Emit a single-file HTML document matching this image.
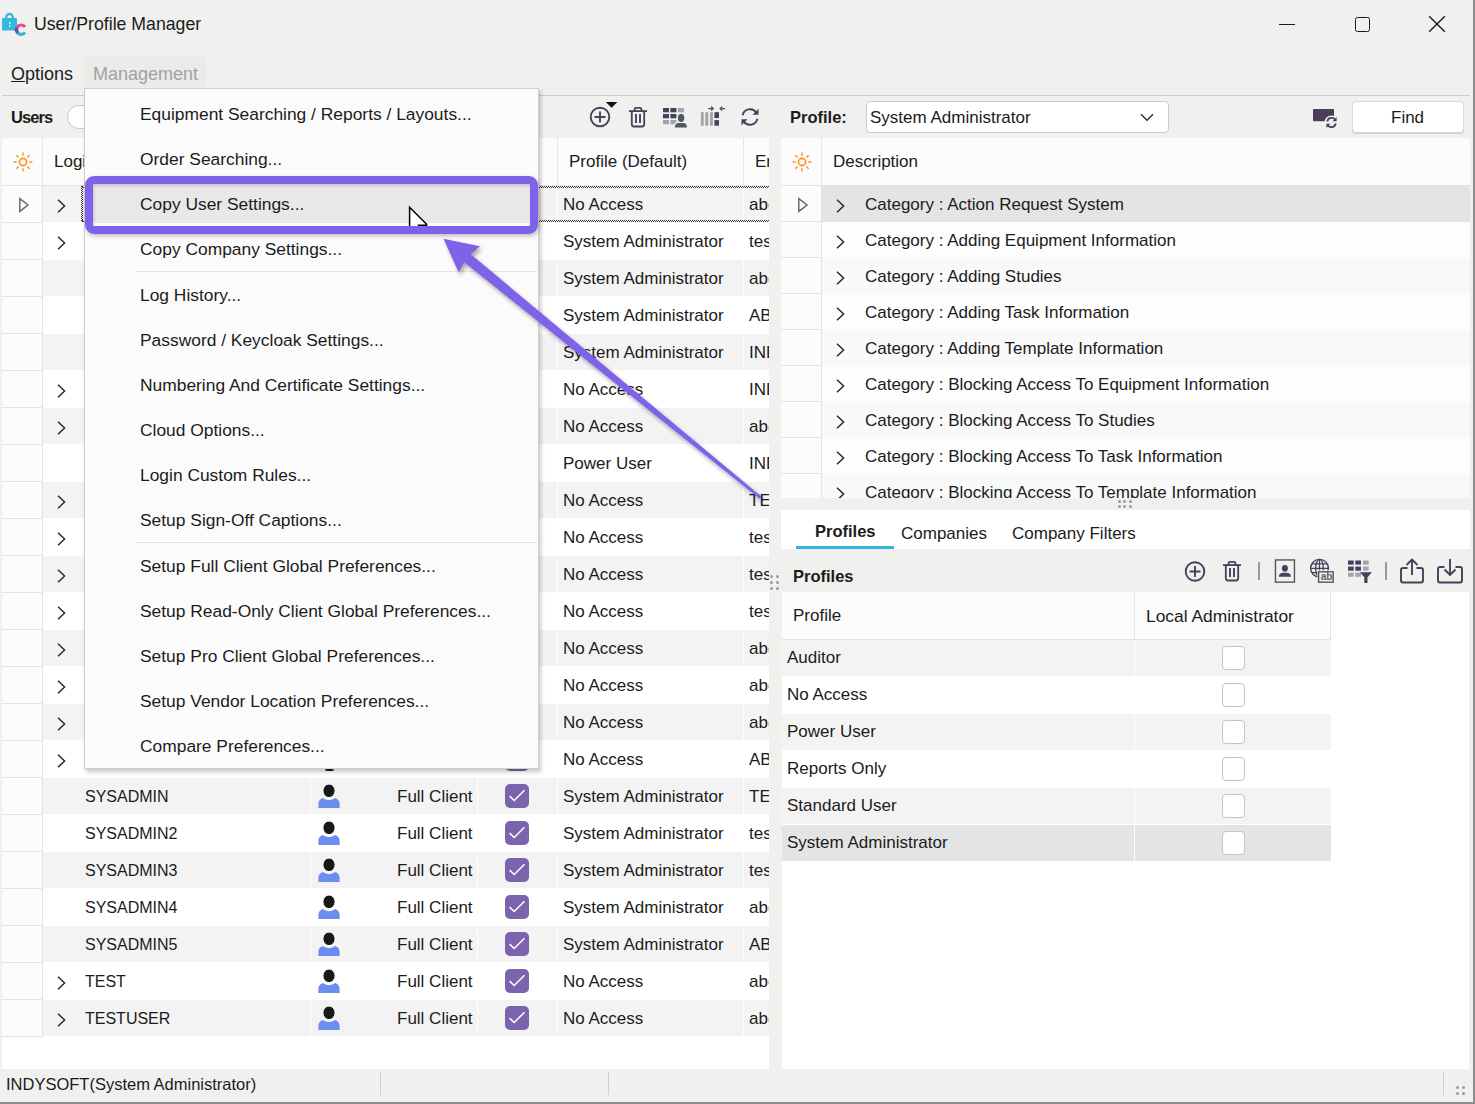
<!DOCTYPE html><html><head><meta charset="utf-8"><style>
*{box-sizing:border-box;margin:0;padding:0}
html,body{width:1475px;height:1104px;overflow:hidden}
body{position:relative;background:#f0f0ef;font-family:"Liberation Sans",sans-serif;font-size:17px;color:#1b1b1b}
.ab{position:absolute}
.t{position:absolute;white-space:nowrap}
svg{position:absolute;overflow:visible}
.chev{position:absolute;width:9px;height:14px}
</style></head><body>

<div class="ab" style="left:1473px;top:0;width:2px;height:1104px;background:#8f8f8f"></div>
<div class="ab" style="left:0;top:1102px;width:1475px;height:2px;background:#8f8f8f"></div>
<svg style="left:0;top:8px" width="32" height="32" viewBox="0 0 32 32">
<path d="M6.2 10.5 V9.3 A3.3 3.3 0 0 1 12.8 9.3 V10.5" fill="none" stroke="#35b8e0" stroke-width="2.3"/>
<rect x="2" y="10" width="15" height="12.6" rx="1.2" fill="#35b8e0"/>
<rect x="9" y="14" width="1.4" height="2" fill="#f0f0ef"/><rect x="9" y="17.2" width="1.4" height="1.6" fill="#f0f0ef"/>
<path d="M25.05 19.00 A4.7 4.7 0 0 0 17.13 19.35" fill="none" stroke="#e04e9a" stroke-width="3.2"/>
<path d="M17.13 19.35 A4.7 4.7 0 0 0 18.06 25.19" fill="none" stroke="#6f4fa8" stroke-width="3.2"/>
<path d="M18.06 25.19 A4.7 4.7 0 0 0 25.05 24.40" fill="none" stroke="#35b8e0" stroke-width="3.2"/>
</svg>
<div class="t" style="left:34px;top:12px;font-size:17.7px;line-height:24px">User/Profile Manager</div>
<div class="ab" style="left:1279px;top:23.8px;width:16px;height:1.5px;background:#1b1b1b"></div>
<div class="ab" style="left:1354.5px;top:16.5px;width:15px;height:15px;border:1.5px solid #1b1b1b;border-radius:2.5px"></div>
<svg style="left:1428px;top:15px" width="18" height="18" viewBox="0 0 18 18"><path d="M1.2 1.2 L16.8 16.8 M16.8 1.2 L1.2 16.8" stroke="#1b1b1b" stroke-width="1.45"/></svg>
<div class="t" style="left:11px;top:62px;font-size:18px;line-height:24px;">Options</div>
<div class="ab" style="left:11px;top:81px;width:14px;height:1px;background:#1b1b1b"></div>
<div class="ab" style="left:84px;top:57px;width:123px;height:30px;background:#ebebea;border-radius:3px"></div>
<div class="t" style="left:93px;top:62px;font-size:18px;line-height:24px;color:#a2a2a2">Management</div>
<div class="ab" style="left:2px;top:95px;width:1468px;height:1px;background:#cdcdcd"></div>
<div class="t" style="left:11px;top:105px;font-size:16.5px;line-height:24px;font-weight:bold;letter-spacing:-0.9px">Users</div>
<div class="ab" style="left:67px;top:105px;width:40px;height:23.5px;background:#fff;border:1.2px solid #c9c9c9;border-radius:12px"></div>
<svg style="left:588px;top:100px" width="32" height="30" viewBox="0 0 32 30">
<circle cx="12" cy="17" r="9.3" fill="none" stroke="#4a3e5c" stroke-width="1.9"/>
<path d="M12 11.5 V22.5 M6.5 17 H17.5" stroke="#4a3e5c" stroke-width="1.9"/>
<path d="M17.8 1.9 H29.4 L23.6 7.7 Z" fill="#111"/></svg>
<svg style="left:628px;top:106px" width="20" height="22" viewBox="0 0 20 22">
<path d="M1 5.1 H19" stroke="#4a3e5c" stroke-width="1.8"/>
<path d="M6.6 5.1 V3.3 Q6.6 1.9 8.2 1.9 H11.8 Q13.4 1.9 13.4 3.3 V5.1" fill="none" stroke="#4a3e5c" stroke-width="1.8"/>
<path d="M3.8 5.1 V18.3 Q3.8 20.5 5.9 20.5 H14.1 Q16.2 20.5 16.2 18.3 V5.1" fill="none" stroke="#4a3e5c" stroke-width="1.8"/>
<path d="M8 8 V17 M12 8 V17" stroke="#4a3e5c" stroke-width="1.9"/></svg>
<svg style="left:663px;top:107px" width="26" height="22" viewBox="0 0 26 22"><rect x="0" y="1.0" width="6" height="4.3" fill="#4a3e5c"/><rect x="7.4" y="1.0" width="6" height="4.3" fill="#4a3e5c"/><rect x="14.9" y="1.0" width="6" height="4.3" fill="#a3a6a9"/><rect x="0" y="7.0" width="6" height="4.3" fill="#4a3e5c"/><rect x="7.4" y="7.0" width="6" height="4.3" fill="#4a3e5c"/><rect x="14.9" y="7.0" width="6" height="4.3" fill="#a3a6a9"/><rect x="0" y="13.0" width="6" height="4.3" fill="#a3a6a9"/><rect x="7.4" y="13.0" width="6" height="4.3" fill="#a3a6a9"/><rect x="14.9" y="13.0" width="6" height="4.3" fill="#a3a6a9"/><ellipse cx="18.1" cy="10.9" rx="4.2" ry="5" fill="#f0f0ef"/><path d="M10.8 21.5 V19.5 Q11 15 15.5 14.8 H20.8 Q25 15 25 19.5 V21.5 Z" fill="#f0f0ef"/><ellipse cx="18.1" cy="10.9" rx="3.2" ry="4" fill="#4f5860"/><path d="M12 20.6 V19.6 Q12.2 16 15.8 15.9 H20.4 Q23.8 16 23.8 19.6 V20.6 Z" fill="#4f5860"/></svg>
<svg style="left:700px;top:105px" width="26" height="23" viewBox="0 0 26 23">
<rect x="0.9" y="7.2" width="2.8" height="13.5" fill="#a3a6a9"/><rect x="5.3" y="7.2" width="3" height="13.5" fill="#a3a6a9"/><rect x="10" y="7.2" width="2.9" height="13.5" fill="#a3a6a9"/>
<rect x="14.4" y="7.2" width="4.6" height="5.9" fill="#4a3e5c"/><rect x="14.4" y="15.1" width="4.6" height="5.6" fill="#4a3e5c"/>
<path d="M8.3 3.6 H12.5" stroke="#4f5860" stroke-width="1.5"/><path d="M11.2 0.8 L14.2 3.6 L11.2 6.4 Z" fill="#4f5860"/>
<path d="M20.9 3.6 H25.1" stroke="#4f5860" stroke-width="1.5"/><path d="M22.2 0.8 L19.2 3.6 L22.2 6.4 Z" fill="#4f5860"/></svg>
<svg style="left:740px;top:107px" width="20" height="20" viewBox="0 0 20 20">
<path d="M2.6 8.2 A7.6 7.6 0 0 1 16.3 5.6" fill="none" stroke="#4a3e5c" stroke-width="1.9"/>
<path d="M17.4 11.8 A7.6 7.6 0 0 1 3.7 14.4" fill="none" stroke="#4a3e5c" stroke-width="1.9"/>
<path d="M18.5 1.8 V7.8 H12.5 Z" fill="#4a3e5c"/><path d="M1.5 18.2 V12.2 H7.5 Z" fill="#4a3e5c"/></svg>
<div class="ab" style="left:2px;top:138px;width:767px;height:931px;background:#fff"></div>
<div class="ab" style="left:2px;top:138px;width:767px;height:48px;background:#fcfcfc;border-bottom:1px solid #e3e3e3"></div>
<div class="ab" style="left:42px;top:138px;width:1px;height:47px;background:#e6e6e6"></div>
<div class="ab" style="left:310px;top:138px;width:1px;height:47px;background:#e6e6e6"></div>
<div class="ab" style="left:477px;top:138px;width:1px;height:47px;background:#e6e6e6"></div>
<div class="ab" style="left:557px;top:138px;width:1px;height:47px;background:#e6e6e6"></div>
<div class="ab" style="left:743px;top:138px;width:1px;height:47px;background:#e6e6e6"></div>
<svg style="left:12.8px;top:152px" width="20" height="20" viewBox="-10 -10 20 20"><circle cx="0" cy="0" r="3.6" fill="none" stroke="#f7901e" stroke-width="1.6"/><line x1="6.30" y1="0.00" x2="9.40" y2="0.00" stroke="#f7901e" stroke-width="1.4"/><line x1="4.45" y1="4.45" x2="6.65" y2="6.65" stroke="#f7901e" stroke-width="1.4"/><line x1="0.00" y1="6.30" x2="0.00" y2="9.40" stroke="#f7901e" stroke-width="1.4"/><line x1="-4.45" y1="4.45" x2="-6.65" y2="6.65" stroke="#f7901e" stroke-width="1.4"/><line x1="-6.30" y1="0.00" x2="-9.40" y2="0.00" stroke="#f7901e" stroke-width="1.4"/><line x1="-4.45" y1="-4.45" x2="-6.65" y2="-6.65" stroke="#f7901e" stroke-width="1.4"/><line x1="-0.00" y1="-6.30" x2="-0.00" y2="-9.40" stroke="#f7901e" stroke-width="1.4"/><line x1="4.45" y1="-4.45" x2="6.65" y2="-6.65" stroke="#f7901e" stroke-width="1.4"/></svg>
<div class="t" style="left:54px;top:150px;line-height:24px">Login</div>
<div class="t" style="left:569px;top:150px;line-height:24px">Profile (Default)</div>
<div class="t" style="left:755px;top:150px;line-height:24px">Errors</div>
<div class="ab" style="left:769px;top:138px;width:12px;height:931px;background:#f0f0ef"></div>
<div class="ab" style="left:0;top:0;width:769px;height:1069px;overflow:hidden">
<div class="ab" style="left:42px;top:186px;width:727px;height:36px;background:#f3f3f3"></div>
<div class="ab" style="left:2px;top:186px;width:41px;height:37px;background:#fcfcfc;border-bottom:1px solid #e3e3e3;border-right:1px solid #e3e3e3"></div>
<div class="ab" style="left:310px;top:186px;width:1px;height:37px;background:#fff"></div>
<div class="ab" style="left:477px;top:186px;width:1px;height:37px;background:#fff"></div>
<div class="ab" style="left:557px;top:186px;width:1px;height:37px;background:#fff"></div>
<div class="ab" style="left:743px;top:186px;width:1px;height:37px;background:#fff"></div>
<svg style="left:57px;top:198.5px" width="9" height="14" viewBox="0 0 9 14"><path d="M1 0.7 L7.6 7 L1 13.3" fill="none" stroke="#2b2b2b" stroke-width="1.5"/></svg>
<div class="t" style="left:85px;top:193px;line-height:24px;font-size:16px">USER01</div>
<svg style="left:318px;top:192px" width="23" height="25" viewBox="0 0 23 25"><path d="M0.4 24 V19.6 Q0.6 15.6 4.6 14.1 Q7.6 16.2 11 16.2 Q14.4 16.2 17.4 14.1 Q21.4 15.6 21.6 19.6 V24 Z" fill="#6a8def"/><ellipse cx="11" cy="6.8" rx="6.1" ry="6.8" fill="#181818" stroke="#fff" stroke-width="1"/></svg>
<div class="t" style="left:397px;top:193px;line-height:24px">Full Client</div>
<svg style="left:505px;top:192px" width="24" height="24" viewBox="0 0 24 24"><rect x="0" y="0" width="24" height="24" rx="5" fill="#7b63ae"/><path d="M4.6 12.1 L9.2 16.5 L19.5 6.3" fill="none" stroke="#fff" stroke-width="1.5"/></svg>
<div class="t" style="left:563px;top:193px;line-height:24px">No Access</div>
<div class="t" style="left:749px;top:193px;line-height:24px">abc</div>
<div class="ab" style="left:42px;top:223px;width:727px;height:36px;background:#ffffff"></div>
<div class="ab" style="left:2px;top:223px;width:41px;height:37px;background:#fcfcfc;border-bottom:1px solid #e3e3e3;border-right:1px solid #e3e3e3"></div>
<div class="ab" style="left:310px;top:223px;width:1px;height:37px;background:#fff"></div>
<div class="ab" style="left:477px;top:223px;width:1px;height:37px;background:#fff"></div>
<div class="ab" style="left:557px;top:223px;width:1px;height:37px;background:#fff"></div>
<div class="ab" style="left:743px;top:223px;width:1px;height:37px;background:#fff"></div>
<svg style="left:57px;top:235.5px" width="9" height="14" viewBox="0 0 9 14"><path d="M1 0.7 L7.6 7 L1 13.3" fill="none" stroke="#2b2b2b" stroke-width="1.5"/></svg>
<div class="t" style="left:85px;top:230px;line-height:24px;font-size:16px">USER02</div>
<svg style="left:318px;top:229px" width="23" height="25" viewBox="0 0 23 25"><path d="M0.4 24 V19.6 Q0.6 15.6 4.6 14.1 Q7.6 16.2 11 16.2 Q14.4 16.2 17.4 14.1 Q21.4 15.6 21.6 19.6 V24 Z" fill="#6a8def"/><ellipse cx="11" cy="6.8" rx="6.1" ry="6.8" fill="#181818" stroke="#fff" stroke-width="1"/></svg>
<div class="t" style="left:397px;top:230px;line-height:24px">Full Client</div>
<svg style="left:505px;top:229px" width="24" height="24" viewBox="0 0 24 24"><rect x="0" y="0" width="24" height="24" rx="5" fill="#7b63ae"/><path d="M4.6 12.1 L9.2 16.5 L19.5 6.3" fill="none" stroke="#fff" stroke-width="1.5"/></svg>
<div class="t" style="left:563px;top:230px;line-height:24px">System Administrator</div>
<div class="t" style="left:749px;top:230px;line-height:24px">test</div>
<div class="ab" style="left:42px;top:260px;width:727px;height:36px;background:#f3f3f3"></div>
<div class="ab" style="left:2px;top:260px;width:41px;height:37px;background:#fcfcfc;border-bottom:1px solid #e3e3e3;border-right:1px solid #e3e3e3"></div>
<div class="ab" style="left:310px;top:260px;width:1px;height:37px;background:#fff"></div>
<div class="ab" style="left:477px;top:260px;width:1px;height:37px;background:#fff"></div>
<div class="ab" style="left:557px;top:260px;width:1px;height:37px;background:#fff"></div>
<div class="ab" style="left:743px;top:260px;width:1px;height:37px;background:#fff"></div>
<div class="t" style="left:85px;top:267px;line-height:24px;font-size:16px">USER03</div>
<svg style="left:318px;top:266px" width="23" height="25" viewBox="0 0 23 25"><path d="M0.4 24 V19.6 Q0.6 15.6 4.6 14.1 Q7.6 16.2 11 16.2 Q14.4 16.2 17.4 14.1 Q21.4 15.6 21.6 19.6 V24 Z" fill="#6a8def"/><ellipse cx="11" cy="6.8" rx="6.1" ry="6.8" fill="#181818" stroke="#fff" stroke-width="1"/></svg>
<div class="t" style="left:397px;top:267px;line-height:24px">Full Client</div>
<svg style="left:505px;top:266px" width="24" height="24" viewBox="0 0 24 24"><rect x="0" y="0" width="24" height="24" rx="5" fill="#7b63ae"/><path d="M4.6 12.1 L9.2 16.5 L19.5 6.3" fill="none" stroke="#fff" stroke-width="1.5"/></svg>
<div class="t" style="left:563px;top:267px;line-height:24px">System Administrator</div>
<div class="t" style="left:749px;top:267px;line-height:24px">abc</div>
<div class="ab" style="left:42px;top:297px;width:727px;height:36px;background:#ffffff"></div>
<div class="ab" style="left:2px;top:297px;width:41px;height:37px;background:#fcfcfc;border-bottom:1px solid #e3e3e3;border-right:1px solid #e3e3e3"></div>
<div class="ab" style="left:310px;top:297px;width:1px;height:37px;background:#fff"></div>
<div class="ab" style="left:477px;top:297px;width:1px;height:37px;background:#fff"></div>
<div class="ab" style="left:557px;top:297px;width:1px;height:37px;background:#fff"></div>
<div class="ab" style="left:743px;top:297px;width:1px;height:37px;background:#fff"></div>
<div class="t" style="left:85px;top:304px;line-height:24px;font-size:16px">USER04</div>
<svg style="left:318px;top:303px" width="23" height="25" viewBox="0 0 23 25"><path d="M0.4 24 V19.6 Q0.6 15.6 4.6 14.1 Q7.6 16.2 11 16.2 Q14.4 16.2 17.4 14.1 Q21.4 15.6 21.6 19.6 V24 Z" fill="#6a8def"/><ellipse cx="11" cy="6.8" rx="6.1" ry="6.8" fill="#181818" stroke="#fff" stroke-width="1"/></svg>
<div class="t" style="left:397px;top:304px;line-height:24px">Full Client</div>
<svg style="left:505px;top:303px" width="24" height="24" viewBox="0 0 24 24"><rect x="0" y="0" width="24" height="24" rx="5" fill="#7b63ae"/><path d="M4.6 12.1 L9.2 16.5 L19.5 6.3" fill="none" stroke="#fff" stroke-width="1.5"/></svg>
<div class="t" style="left:563px;top:304px;line-height:24px">System Administrator</div>
<div class="t" style="left:749px;top:304px;line-height:24px">ABC</div>
<div class="ab" style="left:42px;top:334px;width:727px;height:36px;background:#f3f3f3"></div>
<div class="ab" style="left:2px;top:334px;width:41px;height:37px;background:#fcfcfc;border-bottom:1px solid #e3e3e3;border-right:1px solid #e3e3e3"></div>
<div class="ab" style="left:310px;top:334px;width:1px;height:37px;background:#fff"></div>
<div class="ab" style="left:477px;top:334px;width:1px;height:37px;background:#fff"></div>
<div class="ab" style="left:557px;top:334px;width:1px;height:37px;background:#fff"></div>
<div class="ab" style="left:743px;top:334px;width:1px;height:37px;background:#fff"></div>
<div class="t" style="left:85px;top:341px;line-height:24px;font-size:16px">USER05</div>
<svg style="left:318px;top:340px" width="23" height="25" viewBox="0 0 23 25"><path d="M0.4 24 V19.6 Q0.6 15.6 4.6 14.1 Q7.6 16.2 11 16.2 Q14.4 16.2 17.4 14.1 Q21.4 15.6 21.6 19.6 V24 Z" fill="#6a8def"/><ellipse cx="11" cy="6.8" rx="6.1" ry="6.8" fill="#181818" stroke="#fff" stroke-width="1"/></svg>
<div class="t" style="left:397px;top:341px;line-height:24px">Full Client</div>
<svg style="left:505px;top:340px" width="24" height="24" viewBox="0 0 24 24"><rect x="0" y="0" width="24" height="24" rx="5" fill="#7b63ae"/><path d="M4.6 12.1 L9.2 16.5 L19.5 6.3" fill="none" stroke="#fff" stroke-width="1.5"/></svg>
<div class="t" style="left:563px;top:341px;line-height:24px">System Administrator</div>
<div class="t" style="left:749px;top:341px;line-height:24px">INDY</div>
<div class="ab" style="left:42px;top:371px;width:727px;height:36px;background:#ffffff"></div>
<div class="ab" style="left:2px;top:371px;width:41px;height:37px;background:#fcfcfc;border-bottom:1px solid #e3e3e3;border-right:1px solid #e3e3e3"></div>
<div class="ab" style="left:310px;top:371px;width:1px;height:37px;background:#fff"></div>
<div class="ab" style="left:477px;top:371px;width:1px;height:37px;background:#fff"></div>
<div class="ab" style="left:557px;top:371px;width:1px;height:37px;background:#fff"></div>
<div class="ab" style="left:743px;top:371px;width:1px;height:37px;background:#fff"></div>
<svg style="left:57px;top:383.5px" width="9" height="14" viewBox="0 0 9 14"><path d="M1 0.7 L7.6 7 L1 13.3" fill="none" stroke="#2b2b2b" stroke-width="1.5"/></svg>
<div class="t" style="left:85px;top:378px;line-height:24px;font-size:16px">USER06</div>
<svg style="left:318px;top:377px" width="23" height="25" viewBox="0 0 23 25"><path d="M0.4 24 V19.6 Q0.6 15.6 4.6 14.1 Q7.6 16.2 11 16.2 Q14.4 16.2 17.4 14.1 Q21.4 15.6 21.6 19.6 V24 Z" fill="#6a8def"/><ellipse cx="11" cy="6.8" rx="6.1" ry="6.8" fill="#181818" stroke="#fff" stroke-width="1"/></svg>
<div class="t" style="left:397px;top:378px;line-height:24px">Full Client</div>
<svg style="left:505px;top:377px" width="24" height="24" viewBox="0 0 24 24"><rect x="0" y="0" width="24" height="24" rx="5" fill="#7b63ae"/><path d="M4.6 12.1 L9.2 16.5 L19.5 6.3" fill="none" stroke="#fff" stroke-width="1.5"/></svg>
<div class="t" style="left:563px;top:378px;line-height:24px">No Access</div>
<div class="t" style="left:749px;top:378px;line-height:24px">INDY</div>
<div class="ab" style="left:42px;top:408px;width:727px;height:36px;background:#f3f3f3"></div>
<div class="ab" style="left:2px;top:408px;width:41px;height:37px;background:#fcfcfc;border-bottom:1px solid #e3e3e3;border-right:1px solid #e3e3e3"></div>
<div class="ab" style="left:310px;top:408px;width:1px;height:37px;background:#fff"></div>
<div class="ab" style="left:477px;top:408px;width:1px;height:37px;background:#fff"></div>
<div class="ab" style="left:557px;top:408px;width:1px;height:37px;background:#fff"></div>
<div class="ab" style="left:743px;top:408px;width:1px;height:37px;background:#fff"></div>
<svg style="left:57px;top:420.5px" width="9" height="14" viewBox="0 0 9 14"><path d="M1 0.7 L7.6 7 L1 13.3" fill="none" stroke="#2b2b2b" stroke-width="1.5"/></svg>
<div class="t" style="left:85px;top:415px;line-height:24px;font-size:16px">USER07</div>
<svg style="left:318px;top:414px" width="23" height="25" viewBox="0 0 23 25"><path d="M0.4 24 V19.6 Q0.6 15.6 4.6 14.1 Q7.6 16.2 11 16.2 Q14.4 16.2 17.4 14.1 Q21.4 15.6 21.6 19.6 V24 Z" fill="#6a8def"/><ellipse cx="11" cy="6.8" rx="6.1" ry="6.8" fill="#181818" stroke="#fff" stroke-width="1"/></svg>
<div class="t" style="left:397px;top:415px;line-height:24px">Full Client</div>
<svg style="left:505px;top:414px" width="24" height="24" viewBox="0 0 24 24"><rect x="0" y="0" width="24" height="24" rx="5" fill="#7b63ae"/><path d="M4.6 12.1 L9.2 16.5 L19.5 6.3" fill="none" stroke="#fff" stroke-width="1.5"/></svg>
<div class="t" style="left:563px;top:415px;line-height:24px">No Access</div>
<div class="t" style="left:749px;top:415px;line-height:24px">abc</div>
<div class="ab" style="left:42px;top:445px;width:727px;height:36px;background:#ffffff"></div>
<div class="ab" style="left:2px;top:445px;width:41px;height:37px;background:#fcfcfc;border-bottom:1px solid #e3e3e3;border-right:1px solid #e3e3e3"></div>
<div class="ab" style="left:310px;top:445px;width:1px;height:37px;background:#fff"></div>
<div class="ab" style="left:477px;top:445px;width:1px;height:37px;background:#fff"></div>
<div class="ab" style="left:557px;top:445px;width:1px;height:37px;background:#fff"></div>
<div class="ab" style="left:743px;top:445px;width:1px;height:37px;background:#fff"></div>
<div class="t" style="left:85px;top:452px;line-height:24px;font-size:16px">USER08</div>
<svg style="left:318px;top:451px" width="23" height="25" viewBox="0 0 23 25"><path d="M0.4 24 V19.6 Q0.6 15.6 4.6 14.1 Q7.6 16.2 11 16.2 Q14.4 16.2 17.4 14.1 Q21.4 15.6 21.6 19.6 V24 Z" fill="#6a8def"/><ellipse cx="11" cy="6.8" rx="6.1" ry="6.8" fill="#181818" stroke="#fff" stroke-width="1"/></svg>
<div class="t" style="left:397px;top:452px;line-height:24px">Full Client</div>
<svg style="left:505px;top:451px" width="24" height="24" viewBox="0 0 24 24"><rect x="0" y="0" width="24" height="24" rx="5" fill="#7b63ae"/><path d="M4.6 12.1 L9.2 16.5 L19.5 6.3" fill="none" stroke="#fff" stroke-width="1.5"/></svg>
<div class="t" style="left:563px;top:452px;line-height:24px">Power User</div>
<div class="t" style="left:749px;top:452px;line-height:24px">INDY</div>
<div class="ab" style="left:42px;top:482px;width:727px;height:36px;background:#f3f3f3"></div>
<div class="ab" style="left:2px;top:482px;width:41px;height:37px;background:#fcfcfc;border-bottom:1px solid #e3e3e3;border-right:1px solid #e3e3e3"></div>
<div class="ab" style="left:310px;top:482px;width:1px;height:37px;background:#fff"></div>
<div class="ab" style="left:477px;top:482px;width:1px;height:37px;background:#fff"></div>
<div class="ab" style="left:557px;top:482px;width:1px;height:37px;background:#fff"></div>
<div class="ab" style="left:743px;top:482px;width:1px;height:37px;background:#fff"></div>
<svg style="left:57px;top:494.5px" width="9" height="14" viewBox="0 0 9 14"><path d="M1 0.7 L7.6 7 L1 13.3" fill="none" stroke="#2b2b2b" stroke-width="1.5"/></svg>
<div class="t" style="left:85px;top:489px;line-height:24px;font-size:16px">USER09</div>
<svg style="left:318px;top:488px" width="23" height="25" viewBox="0 0 23 25"><path d="M0.4 24 V19.6 Q0.6 15.6 4.6 14.1 Q7.6 16.2 11 16.2 Q14.4 16.2 17.4 14.1 Q21.4 15.6 21.6 19.6 V24 Z" fill="#6a8def"/><ellipse cx="11" cy="6.8" rx="6.1" ry="6.8" fill="#181818" stroke="#fff" stroke-width="1"/></svg>
<div class="t" style="left:397px;top:489px;line-height:24px">Full Client</div>
<svg style="left:505px;top:488px" width="24" height="24" viewBox="0 0 24 24"><rect x="0" y="0" width="24" height="24" rx="5" fill="#7b63ae"/><path d="M4.6 12.1 L9.2 16.5 L19.5 6.3" fill="none" stroke="#fff" stroke-width="1.5"/></svg>
<div class="t" style="left:563px;top:489px;line-height:24px">No Access</div>
<div class="t" style="left:749px;top:489px;line-height:24px">TEST</div>
<div class="ab" style="left:42px;top:519px;width:727px;height:36px;background:#ffffff"></div>
<div class="ab" style="left:2px;top:519px;width:41px;height:37px;background:#fcfcfc;border-bottom:1px solid #e3e3e3;border-right:1px solid #e3e3e3"></div>
<div class="ab" style="left:310px;top:519px;width:1px;height:37px;background:#fff"></div>
<div class="ab" style="left:477px;top:519px;width:1px;height:37px;background:#fff"></div>
<div class="ab" style="left:557px;top:519px;width:1px;height:37px;background:#fff"></div>
<div class="ab" style="left:743px;top:519px;width:1px;height:37px;background:#fff"></div>
<svg style="left:57px;top:531.5px" width="9" height="14" viewBox="0 0 9 14"><path d="M1 0.7 L7.6 7 L1 13.3" fill="none" stroke="#2b2b2b" stroke-width="1.5"/></svg>
<div class="t" style="left:85px;top:526px;line-height:24px;font-size:16px">USER10</div>
<svg style="left:318px;top:525px" width="23" height="25" viewBox="0 0 23 25"><path d="M0.4 24 V19.6 Q0.6 15.6 4.6 14.1 Q7.6 16.2 11 16.2 Q14.4 16.2 17.4 14.1 Q21.4 15.6 21.6 19.6 V24 Z" fill="#6a8def"/><ellipse cx="11" cy="6.8" rx="6.1" ry="6.8" fill="#181818" stroke="#fff" stroke-width="1"/></svg>
<div class="t" style="left:397px;top:526px;line-height:24px">Full Client</div>
<svg style="left:505px;top:525px" width="24" height="24" viewBox="0 0 24 24"><rect x="0" y="0" width="24" height="24" rx="5" fill="#7b63ae"/><path d="M4.6 12.1 L9.2 16.5 L19.5 6.3" fill="none" stroke="#fff" stroke-width="1.5"/></svg>
<div class="t" style="left:563px;top:526px;line-height:24px">No Access</div>
<div class="t" style="left:749px;top:526px;line-height:24px">test</div>
<div class="ab" style="left:42px;top:556px;width:727px;height:36px;background:#f3f3f3"></div>
<div class="ab" style="left:2px;top:556px;width:41px;height:37px;background:#fcfcfc;border-bottom:1px solid #e3e3e3;border-right:1px solid #e3e3e3"></div>
<div class="ab" style="left:310px;top:556px;width:1px;height:37px;background:#fff"></div>
<div class="ab" style="left:477px;top:556px;width:1px;height:37px;background:#fff"></div>
<div class="ab" style="left:557px;top:556px;width:1px;height:37px;background:#fff"></div>
<div class="ab" style="left:743px;top:556px;width:1px;height:37px;background:#fff"></div>
<svg style="left:57px;top:568.5px" width="9" height="14" viewBox="0 0 9 14"><path d="M1 0.7 L7.6 7 L1 13.3" fill="none" stroke="#2b2b2b" stroke-width="1.5"/></svg>
<div class="t" style="left:85px;top:563px;line-height:24px;font-size:16px">USER11</div>
<svg style="left:318px;top:562px" width="23" height="25" viewBox="0 0 23 25"><path d="M0.4 24 V19.6 Q0.6 15.6 4.6 14.1 Q7.6 16.2 11 16.2 Q14.4 16.2 17.4 14.1 Q21.4 15.6 21.6 19.6 V24 Z" fill="#6a8def"/><ellipse cx="11" cy="6.8" rx="6.1" ry="6.8" fill="#181818" stroke="#fff" stroke-width="1"/></svg>
<div class="t" style="left:397px;top:563px;line-height:24px">Full Client</div>
<svg style="left:505px;top:562px" width="24" height="24" viewBox="0 0 24 24"><rect x="0" y="0" width="24" height="24" rx="5" fill="#7b63ae"/><path d="M4.6 12.1 L9.2 16.5 L19.5 6.3" fill="none" stroke="#fff" stroke-width="1.5"/></svg>
<div class="t" style="left:563px;top:563px;line-height:24px">No Access</div>
<div class="t" style="left:749px;top:563px;line-height:24px">test</div>
<div class="ab" style="left:42px;top:593px;width:727px;height:36px;background:#ffffff"></div>
<div class="ab" style="left:2px;top:593px;width:41px;height:37px;background:#fcfcfc;border-bottom:1px solid #e3e3e3;border-right:1px solid #e3e3e3"></div>
<div class="ab" style="left:310px;top:593px;width:1px;height:37px;background:#fff"></div>
<div class="ab" style="left:477px;top:593px;width:1px;height:37px;background:#fff"></div>
<div class="ab" style="left:557px;top:593px;width:1px;height:37px;background:#fff"></div>
<div class="ab" style="left:743px;top:593px;width:1px;height:37px;background:#fff"></div>
<svg style="left:57px;top:605.5px" width="9" height="14" viewBox="0 0 9 14"><path d="M1 0.7 L7.6 7 L1 13.3" fill="none" stroke="#2b2b2b" stroke-width="1.5"/></svg>
<div class="t" style="left:85px;top:600px;line-height:24px;font-size:16px">USER12</div>
<svg style="left:318px;top:599px" width="23" height="25" viewBox="0 0 23 25"><path d="M0.4 24 V19.6 Q0.6 15.6 4.6 14.1 Q7.6 16.2 11 16.2 Q14.4 16.2 17.4 14.1 Q21.4 15.6 21.6 19.6 V24 Z" fill="#6a8def"/><ellipse cx="11" cy="6.8" rx="6.1" ry="6.8" fill="#181818" stroke="#fff" stroke-width="1"/></svg>
<div class="t" style="left:397px;top:600px;line-height:24px">Full Client</div>
<svg style="left:505px;top:599px" width="24" height="24" viewBox="0 0 24 24"><rect x="0" y="0" width="24" height="24" rx="5" fill="#7b63ae"/><path d="M4.6 12.1 L9.2 16.5 L19.5 6.3" fill="none" stroke="#fff" stroke-width="1.5"/></svg>
<div class="t" style="left:563px;top:600px;line-height:24px">No Access</div>
<div class="t" style="left:749px;top:600px;line-height:24px">test</div>
<div class="ab" style="left:42px;top:630px;width:727px;height:36px;background:#f3f3f3"></div>
<div class="ab" style="left:2px;top:630px;width:41px;height:37px;background:#fcfcfc;border-bottom:1px solid #e3e3e3;border-right:1px solid #e3e3e3"></div>
<div class="ab" style="left:310px;top:630px;width:1px;height:37px;background:#fff"></div>
<div class="ab" style="left:477px;top:630px;width:1px;height:37px;background:#fff"></div>
<div class="ab" style="left:557px;top:630px;width:1px;height:37px;background:#fff"></div>
<div class="ab" style="left:743px;top:630px;width:1px;height:37px;background:#fff"></div>
<svg style="left:57px;top:642.5px" width="9" height="14" viewBox="0 0 9 14"><path d="M1 0.7 L7.6 7 L1 13.3" fill="none" stroke="#2b2b2b" stroke-width="1.5"/></svg>
<div class="t" style="left:85px;top:637px;line-height:24px;font-size:16px">USER13</div>
<svg style="left:318px;top:636px" width="23" height="25" viewBox="0 0 23 25"><path d="M0.4 24 V19.6 Q0.6 15.6 4.6 14.1 Q7.6 16.2 11 16.2 Q14.4 16.2 17.4 14.1 Q21.4 15.6 21.6 19.6 V24 Z" fill="#6a8def"/><ellipse cx="11" cy="6.8" rx="6.1" ry="6.8" fill="#181818" stroke="#fff" stroke-width="1"/></svg>
<div class="t" style="left:397px;top:637px;line-height:24px">Full Client</div>
<svg style="left:505px;top:636px" width="24" height="24" viewBox="0 0 24 24"><rect x="0" y="0" width="24" height="24" rx="5" fill="#7b63ae"/><path d="M4.6 12.1 L9.2 16.5 L19.5 6.3" fill="none" stroke="#fff" stroke-width="1.5"/></svg>
<div class="t" style="left:563px;top:637px;line-height:24px">No Access</div>
<div class="t" style="left:749px;top:637px;line-height:24px">abc</div>
<div class="ab" style="left:42px;top:667px;width:727px;height:36px;background:#ffffff"></div>
<div class="ab" style="left:2px;top:667px;width:41px;height:37px;background:#fcfcfc;border-bottom:1px solid #e3e3e3;border-right:1px solid #e3e3e3"></div>
<div class="ab" style="left:310px;top:667px;width:1px;height:37px;background:#fff"></div>
<div class="ab" style="left:477px;top:667px;width:1px;height:37px;background:#fff"></div>
<div class="ab" style="left:557px;top:667px;width:1px;height:37px;background:#fff"></div>
<div class="ab" style="left:743px;top:667px;width:1px;height:37px;background:#fff"></div>
<svg style="left:57px;top:679.5px" width="9" height="14" viewBox="0 0 9 14"><path d="M1 0.7 L7.6 7 L1 13.3" fill="none" stroke="#2b2b2b" stroke-width="1.5"/></svg>
<div class="t" style="left:85px;top:674px;line-height:24px;font-size:16px">USER14</div>
<svg style="left:318px;top:673px" width="23" height="25" viewBox="0 0 23 25"><path d="M0.4 24 V19.6 Q0.6 15.6 4.6 14.1 Q7.6 16.2 11 16.2 Q14.4 16.2 17.4 14.1 Q21.4 15.6 21.6 19.6 V24 Z" fill="#6a8def"/><ellipse cx="11" cy="6.8" rx="6.1" ry="6.8" fill="#181818" stroke="#fff" stroke-width="1"/></svg>
<div class="t" style="left:397px;top:674px;line-height:24px">Full Client</div>
<svg style="left:505px;top:673px" width="24" height="24" viewBox="0 0 24 24"><rect x="0" y="0" width="24" height="24" rx="5" fill="#7b63ae"/><path d="M4.6 12.1 L9.2 16.5 L19.5 6.3" fill="none" stroke="#fff" stroke-width="1.5"/></svg>
<div class="t" style="left:563px;top:674px;line-height:24px">No Access</div>
<div class="t" style="left:749px;top:674px;line-height:24px">abc</div>
<div class="ab" style="left:42px;top:704px;width:727px;height:36px;background:#f3f3f3"></div>
<div class="ab" style="left:2px;top:704px;width:41px;height:37px;background:#fcfcfc;border-bottom:1px solid #e3e3e3;border-right:1px solid #e3e3e3"></div>
<div class="ab" style="left:310px;top:704px;width:1px;height:37px;background:#fff"></div>
<div class="ab" style="left:477px;top:704px;width:1px;height:37px;background:#fff"></div>
<div class="ab" style="left:557px;top:704px;width:1px;height:37px;background:#fff"></div>
<div class="ab" style="left:743px;top:704px;width:1px;height:37px;background:#fff"></div>
<svg style="left:57px;top:716.5px" width="9" height="14" viewBox="0 0 9 14"><path d="M1 0.7 L7.6 7 L1 13.3" fill="none" stroke="#2b2b2b" stroke-width="1.5"/></svg>
<div class="t" style="left:85px;top:711px;line-height:24px;font-size:16px">USER15</div>
<svg style="left:318px;top:710px" width="23" height="25" viewBox="0 0 23 25"><path d="M0.4 24 V19.6 Q0.6 15.6 4.6 14.1 Q7.6 16.2 11 16.2 Q14.4 16.2 17.4 14.1 Q21.4 15.6 21.6 19.6 V24 Z" fill="#6a8def"/><ellipse cx="11" cy="6.8" rx="6.1" ry="6.8" fill="#181818" stroke="#fff" stroke-width="1"/></svg>
<div class="t" style="left:397px;top:711px;line-height:24px">Full Client</div>
<svg style="left:505px;top:710px" width="24" height="24" viewBox="0 0 24 24"><rect x="0" y="0" width="24" height="24" rx="5" fill="#7b63ae"/><path d="M4.6 12.1 L9.2 16.5 L19.5 6.3" fill="none" stroke="#fff" stroke-width="1.5"/></svg>
<div class="t" style="left:563px;top:711px;line-height:24px">No Access</div>
<div class="t" style="left:749px;top:711px;line-height:24px">abc</div>
<div class="ab" style="left:42px;top:741px;width:727px;height:36px;background:#ffffff"></div>
<div class="ab" style="left:2px;top:741px;width:41px;height:37px;background:#fcfcfc;border-bottom:1px solid #e3e3e3;border-right:1px solid #e3e3e3"></div>
<div class="ab" style="left:310px;top:741px;width:1px;height:37px;background:#fff"></div>
<div class="ab" style="left:477px;top:741px;width:1px;height:37px;background:#fff"></div>
<div class="ab" style="left:557px;top:741px;width:1px;height:37px;background:#fff"></div>
<div class="ab" style="left:743px;top:741px;width:1px;height:37px;background:#fff"></div>
<svg style="left:57px;top:753.5px" width="9" height="14" viewBox="0 0 9 14"><path d="M1 0.7 L7.6 7 L1 13.3" fill="none" stroke="#2b2b2b" stroke-width="1.5"/></svg>
<div class="t" style="left:85px;top:748px;line-height:24px;font-size:16px">USER16</div>
<div class="ab" style="left:324.5px;top:769.3px;width:9px;height:2.2px;border-radius:50%;background:#111"></div>
<div class="t" style="left:397px;top:748px;line-height:24px">Full Client</div>
<svg style="left:505px;top:747px" width="24" height="24" viewBox="0 0 24 24"><rect x="0" y="0" width="24" height="24" rx="5" fill="#7b63ae"/><path d="M4.6 12.1 L9.2 16.5 L19.5 6.3" fill="none" stroke="#fff" stroke-width="1.5"/></svg>
<div class="t" style="left:563px;top:748px;line-height:24px">No Access</div>
<div class="t" style="left:749px;top:748px;line-height:24px">ABC</div>
<div class="ab" style="left:42px;top:778px;width:727px;height:36px;background:#f3f3f3"></div>
<div class="ab" style="left:2px;top:778px;width:41px;height:37px;background:#fcfcfc;border-bottom:1px solid #e3e3e3;border-right:1px solid #e3e3e3"></div>
<div class="ab" style="left:310px;top:778px;width:1px;height:37px;background:#fff"></div>
<div class="ab" style="left:477px;top:778px;width:1px;height:37px;background:#fff"></div>
<div class="ab" style="left:557px;top:778px;width:1px;height:37px;background:#fff"></div>
<div class="ab" style="left:743px;top:778px;width:1px;height:37px;background:#fff"></div>
<div class="t" style="left:85px;top:785px;line-height:24px;font-size:16px">SYSADMIN</div>
<svg style="left:318px;top:784px" width="23" height="25" viewBox="0 0 23 25"><path d="M0.4 24 V19.6 Q0.6 15.6 4.6 14.1 Q7.6 16.2 11 16.2 Q14.4 16.2 17.4 14.1 Q21.4 15.6 21.6 19.6 V24 Z" fill="#6a8def"/><ellipse cx="11" cy="6.8" rx="6.1" ry="6.8" fill="#181818" stroke="#fff" stroke-width="1"/></svg>
<div class="t" style="left:397px;top:785px;line-height:24px">Full Client</div>
<svg style="left:505px;top:784px" width="24" height="24" viewBox="0 0 24 24"><rect x="0" y="0" width="24" height="24" rx="5" fill="#7b63ae"/><path d="M4.6 12.1 L9.2 16.5 L19.5 6.3" fill="none" stroke="#fff" stroke-width="1.5"/></svg>
<div class="t" style="left:563px;top:785px;line-height:24px">System Administrator</div>
<div class="t" style="left:749px;top:785px;line-height:24px">TEST</div>
<div class="ab" style="left:42px;top:815px;width:727px;height:36px;background:#ffffff"></div>
<div class="ab" style="left:2px;top:815px;width:41px;height:37px;background:#fcfcfc;border-bottom:1px solid #e3e3e3;border-right:1px solid #e3e3e3"></div>
<div class="ab" style="left:310px;top:815px;width:1px;height:37px;background:#fff"></div>
<div class="ab" style="left:477px;top:815px;width:1px;height:37px;background:#fff"></div>
<div class="ab" style="left:557px;top:815px;width:1px;height:37px;background:#fff"></div>
<div class="ab" style="left:743px;top:815px;width:1px;height:37px;background:#fff"></div>
<div class="t" style="left:85px;top:822px;line-height:24px;font-size:16px">SYSADMIN2</div>
<svg style="left:318px;top:821px" width="23" height="25" viewBox="0 0 23 25"><path d="M0.4 24 V19.6 Q0.6 15.6 4.6 14.1 Q7.6 16.2 11 16.2 Q14.4 16.2 17.4 14.1 Q21.4 15.6 21.6 19.6 V24 Z" fill="#6a8def"/><ellipse cx="11" cy="6.8" rx="6.1" ry="6.8" fill="#181818" stroke="#fff" stroke-width="1"/></svg>
<div class="t" style="left:397px;top:822px;line-height:24px">Full Client</div>
<svg style="left:505px;top:821px" width="24" height="24" viewBox="0 0 24 24"><rect x="0" y="0" width="24" height="24" rx="5" fill="#7b63ae"/><path d="M4.6 12.1 L9.2 16.5 L19.5 6.3" fill="none" stroke="#fff" stroke-width="1.5"/></svg>
<div class="t" style="left:563px;top:822px;line-height:24px">System Administrator</div>
<div class="t" style="left:749px;top:822px;line-height:24px">test</div>
<div class="ab" style="left:42px;top:852px;width:727px;height:36px;background:#f3f3f3"></div>
<div class="ab" style="left:2px;top:852px;width:41px;height:37px;background:#fcfcfc;border-bottom:1px solid #e3e3e3;border-right:1px solid #e3e3e3"></div>
<div class="ab" style="left:310px;top:852px;width:1px;height:37px;background:#fff"></div>
<div class="ab" style="left:477px;top:852px;width:1px;height:37px;background:#fff"></div>
<div class="ab" style="left:557px;top:852px;width:1px;height:37px;background:#fff"></div>
<div class="ab" style="left:743px;top:852px;width:1px;height:37px;background:#fff"></div>
<div class="t" style="left:85px;top:859px;line-height:24px;font-size:16px">SYSADMIN3</div>
<svg style="left:318px;top:858px" width="23" height="25" viewBox="0 0 23 25"><path d="M0.4 24 V19.6 Q0.6 15.6 4.6 14.1 Q7.6 16.2 11 16.2 Q14.4 16.2 17.4 14.1 Q21.4 15.6 21.6 19.6 V24 Z" fill="#6a8def"/><ellipse cx="11" cy="6.8" rx="6.1" ry="6.8" fill="#181818" stroke="#fff" stroke-width="1"/></svg>
<div class="t" style="left:397px;top:859px;line-height:24px">Full Client</div>
<svg style="left:505px;top:858px" width="24" height="24" viewBox="0 0 24 24"><rect x="0" y="0" width="24" height="24" rx="5" fill="#7b63ae"/><path d="M4.6 12.1 L9.2 16.5 L19.5 6.3" fill="none" stroke="#fff" stroke-width="1.5"/></svg>
<div class="t" style="left:563px;top:859px;line-height:24px">System Administrator</div>
<div class="t" style="left:749px;top:859px;line-height:24px">test</div>
<div class="ab" style="left:42px;top:889px;width:727px;height:36px;background:#ffffff"></div>
<div class="ab" style="left:2px;top:889px;width:41px;height:37px;background:#fcfcfc;border-bottom:1px solid #e3e3e3;border-right:1px solid #e3e3e3"></div>
<div class="ab" style="left:310px;top:889px;width:1px;height:37px;background:#fff"></div>
<div class="ab" style="left:477px;top:889px;width:1px;height:37px;background:#fff"></div>
<div class="ab" style="left:557px;top:889px;width:1px;height:37px;background:#fff"></div>
<div class="ab" style="left:743px;top:889px;width:1px;height:37px;background:#fff"></div>
<div class="t" style="left:85px;top:896px;line-height:24px;font-size:16px">SYSADMIN4</div>
<svg style="left:318px;top:895px" width="23" height="25" viewBox="0 0 23 25"><path d="M0.4 24 V19.6 Q0.6 15.6 4.6 14.1 Q7.6 16.2 11 16.2 Q14.4 16.2 17.4 14.1 Q21.4 15.6 21.6 19.6 V24 Z" fill="#6a8def"/><ellipse cx="11" cy="6.8" rx="6.1" ry="6.8" fill="#181818" stroke="#fff" stroke-width="1"/></svg>
<div class="t" style="left:397px;top:896px;line-height:24px">Full Client</div>
<svg style="left:505px;top:895px" width="24" height="24" viewBox="0 0 24 24"><rect x="0" y="0" width="24" height="24" rx="5" fill="#7b63ae"/><path d="M4.6 12.1 L9.2 16.5 L19.5 6.3" fill="none" stroke="#fff" stroke-width="1.5"/></svg>
<div class="t" style="left:563px;top:896px;line-height:24px">System Administrator</div>
<div class="t" style="left:749px;top:896px;line-height:24px">abc</div>
<div class="ab" style="left:42px;top:926px;width:727px;height:36px;background:#f3f3f3"></div>
<div class="ab" style="left:2px;top:926px;width:41px;height:37px;background:#fcfcfc;border-bottom:1px solid #e3e3e3;border-right:1px solid #e3e3e3"></div>
<div class="ab" style="left:310px;top:926px;width:1px;height:37px;background:#fff"></div>
<div class="ab" style="left:477px;top:926px;width:1px;height:37px;background:#fff"></div>
<div class="ab" style="left:557px;top:926px;width:1px;height:37px;background:#fff"></div>
<div class="ab" style="left:743px;top:926px;width:1px;height:37px;background:#fff"></div>
<div class="t" style="left:85px;top:933px;line-height:24px;font-size:16px">SYSADMIN5</div>
<svg style="left:318px;top:932px" width="23" height="25" viewBox="0 0 23 25"><path d="M0.4 24 V19.6 Q0.6 15.6 4.6 14.1 Q7.6 16.2 11 16.2 Q14.4 16.2 17.4 14.1 Q21.4 15.6 21.6 19.6 V24 Z" fill="#6a8def"/><ellipse cx="11" cy="6.8" rx="6.1" ry="6.8" fill="#181818" stroke="#fff" stroke-width="1"/></svg>
<div class="t" style="left:397px;top:933px;line-height:24px">Full Client</div>
<svg style="left:505px;top:932px" width="24" height="24" viewBox="0 0 24 24"><rect x="0" y="0" width="24" height="24" rx="5" fill="#7b63ae"/><path d="M4.6 12.1 L9.2 16.5 L19.5 6.3" fill="none" stroke="#fff" stroke-width="1.5"/></svg>
<div class="t" style="left:563px;top:933px;line-height:24px">System Administrator</div>
<div class="t" style="left:749px;top:933px;line-height:24px">ABC</div>
<div class="ab" style="left:42px;top:963px;width:727px;height:36px;background:#ffffff"></div>
<div class="ab" style="left:2px;top:963px;width:41px;height:37px;background:#fcfcfc;border-bottom:1px solid #e3e3e3;border-right:1px solid #e3e3e3"></div>
<div class="ab" style="left:310px;top:963px;width:1px;height:37px;background:#fff"></div>
<div class="ab" style="left:477px;top:963px;width:1px;height:37px;background:#fff"></div>
<div class="ab" style="left:557px;top:963px;width:1px;height:37px;background:#fff"></div>
<div class="ab" style="left:743px;top:963px;width:1px;height:37px;background:#fff"></div>
<svg style="left:57px;top:975.5px" width="9" height="14" viewBox="0 0 9 14"><path d="M1 0.7 L7.6 7 L1 13.3" fill="none" stroke="#2b2b2b" stroke-width="1.5"/></svg>
<div class="t" style="left:85px;top:970px;line-height:24px;font-size:16px">TEST</div>
<svg style="left:318px;top:969px" width="23" height="25" viewBox="0 0 23 25"><path d="M0.4 24 V19.6 Q0.6 15.6 4.6 14.1 Q7.6 16.2 11 16.2 Q14.4 16.2 17.4 14.1 Q21.4 15.6 21.6 19.6 V24 Z" fill="#6a8def"/><ellipse cx="11" cy="6.8" rx="6.1" ry="6.8" fill="#181818" stroke="#fff" stroke-width="1"/></svg>
<div class="t" style="left:397px;top:970px;line-height:24px">Full Client</div>
<svg style="left:505px;top:969px" width="24" height="24" viewBox="0 0 24 24"><rect x="0" y="0" width="24" height="24" rx="5" fill="#7b63ae"/><path d="M4.6 12.1 L9.2 16.5 L19.5 6.3" fill="none" stroke="#fff" stroke-width="1.5"/></svg>
<div class="t" style="left:563px;top:970px;line-height:24px">No Access</div>
<div class="t" style="left:749px;top:970px;line-height:24px">abc</div>
<div class="ab" style="left:42px;top:1000px;width:727px;height:36px;background:#f3f3f3"></div>
<div class="ab" style="left:2px;top:1000px;width:41px;height:37px;background:#fcfcfc;border-bottom:1px solid #e3e3e3;border-right:1px solid #e3e3e3"></div>
<div class="ab" style="left:310px;top:1000px;width:1px;height:37px;background:#fff"></div>
<div class="ab" style="left:477px;top:1000px;width:1px;height:37px;background:#fff"></div>
<div class="ab" style="left:557px;top:1000px;width:1px;height:37px;background:#fff"></div>
<div class="ab" style="left:743px;top:1000px;width:1px;height:37px;background:#fff"></div>
<svg style="left:57px;top:1012.5px" width="9" height="14" viewBox="0 0 9 14"><path d="M1 0.7 L7.6 7 L1 13.3" fill="none" stroke="#2b2b2b" stroke-width="1.5"/></svg>
<div class="t" style="left:85px;top:1007px;line-height:24px;font-size:16px">TESTUSER</div>
<svg style="left:318px;top:1006px" width="23" height="25" viewBox="0 0 23 25"><path d="M0.4 24 V19.6 Q0.6 15.6 4.6 14.1 Q7.6 16.2 11 16.2 Q14.4 16.2 17.4 14.1 Q21.4 15.6 21.6 19.6 V24 Z" fill="#6a8def"/><ellipse cx="11" cy="6.8" rx="6.1" ry="6.8" fill="#181818" stroke="#fff" stroke-width="1"/></svg>
<div class="t" style="left:397px;top:1007px;line-height:24px">Full Client</div>
<svg style="left:505px;top:1006px" width="24" height="24" viewBox="0 0 24 24"><rect x="0" y="0" width="24" height="24" rx="5" fill="#7b63ae"/><path d="M4.6 12.1 L9.2 16.5 L19.5 6.3" fill="none" stroke="#fff" stroke-width="1.5"/></svg>
<div class="t" style="left:563px;top:1007px;line-height:24px">No Access</div>
<div class="t" style="left:749px;top:1007px;line-height:24px">abc</div>
</div>
<svg style="left:17.5px;top:196.6px" width="12" height="16" viewBox="0 0 12 16"><path d="M1.8 1.6 L10 8 L1.8 14.4 Z" fill="none" stroke="#6b6b6b" stroke-width="1.5" stroke-linejoin="miter"/></svg>
<div class="ab" style="left:82px;top:186px;width:687px;height:1px;background:repeating-linear-gradient(90deg,#333 0 1px,transparent 1px 2px)"></div>
<div class="ab" style="left:83px;top:187px;width:686px;height:1px;background:repeating-linear-gradient(90deg,#333 0 1px,transparent 1px 2px)"></div>
<div class="ab" style="left:82px;top:220px;width:687px;height:1px;background:repeating-linear-gradient(90deg,#333 0 1px,transparent 1px 2px)"></div>
<div class="ab" style="left:83px;top:221px;width:686px;height:1px;background:repeating-linear-gradient(90deg,#333 0 1px,transparent 1px 2px)"></div>
<div class="ab" style="left:81px;top:186px;width:1px;height:36px;background:repeating-linear-gradient(180deg,#333 0 1px,transparent 1px 2px)"></div>
<div class="ab" style="left:82px;top:187px;width:1px;height:35px;background:repeating-linear-gradient(180deg,#333 0 1px,transparent 1px 2px)"></div>
<div class="t" style="left:790px;top:105px;font-size:16.5px;line-height:24px;font-weight:bold">Profile:</div>
<div class="ab" style="left:866px;top:101px;width:303px;height:32px;background:#fff;border:1px solid #cdcdcd;border-radius:4px"></div>
<div class="t" style="left:870px;top:106px;line-height:24px">System Administrator</div>
<svg style="left:1140px;top:112.7px" width="14" height="9" viewBox="0 0 14 9"><path d="M1 1.2 L7 7.2 L13 1.2" fill="none" stroke="#333" stroke-width="1.5"/></svg>
<svg style="left:1312px;top:108px" width="26" height="22" viewBox="0 0 26 22">
<rect x="1" y="1" width="21" height="12.3" rx="1" fill="#4a3e5c"/>
<g transform="translate(1,0)"><circle cx="18.5" cy="14.5" r="7" fill="#f0f0ef"/>
<path d="M14.2 13.5 A4.6 4.6 0 0 1 22.3 11.6" fill="none" stroke="#4a3e5c" stroke-width="1.8"/>
<path d="M22.8 15.5 A4.6 4.6 0 0 1 14.7 17.4" fill="none" stroke="#4a3e5c" stroke-width="1.8"/>
<path d="M23.6 9.2 V13.3 H19.5 Z" fill="#4a3e5c"/><path d="M13.4 19.8 V15.7 H17.5 Z" fill="#4a3e5c"/></g></svg>
<div class="ab" style="left:1352px;top:101px;width:112px;height:32px;background:#fff;border:1px solid #dadada;border-radius:4px;box-shadow:0 1px 0 #d0d0d0"></div>
<div class="t" style="left:1391px;top:106px;line-height:24px">Find</div>
<div class="ab" style="left:781px;top:138px;width:689px;height:360px;background:#fcfcfc;overflow:hidden">
<div class="ab" style="left:0;top:0;width:689px;height:48px;background:#fcfcfc;border-bottom:1px solid #e3e3e3"></div>
<div class="ab" style="left:40px;top:0;width:1px;height:47px;background:#e6e6e6"></div>
<div class="t" style="left:52px;top:12px;line-height:24px">Description</div>
<div class="ab" style="left:40px;top:48px;width:649px;height:36px;background:#e4e4e4"></div>
<div class="ab" style="left:0;top:48px;width:41px;height:36px;background:#fcfcfc;border-bottom:1px solid #e3e3e3;border-right:1px solid #e3e3e3"></div>
<svg style="left:55px;top:60.5px" width="9" height="14" viewBox="0 0 9 14"><path d="M1 0.7 L7.6 7 L1 13.3" fill="none" stroke="#2b2b2b" stroke-width="1.5"/></svg>
<div class="t" style="left:84px;top:55px;line-height:24px">Category : Action Request System</div>
<div class="ab" style="left:40px;top:84px;width:649px;height:36px;background:#fdfdfd"></div>
<div class="ab" style="left:0;top:84px;width:41px;height:36px;background:#fcfcfc;border-bottom:1px solid #e3e3e3;border-right:1px solid #e3e3e3"></div>
<svg style="left:55px;top:96.5px" width="9" height="14" viewBox="0 0 9 14"><path d="M1 0.7 L7.6 7 L1 13.3" fill="none" stroke="#2b2b2b" stroke-width="1.5"/></svg>
<div class="t" style="left:84px;top:91px;line-height:24px">Category : Adding Equipment Information</div>
<div class="ab" style="left:40px;top:120px;width:649px;height:36px;background:#f9f9f9"></div>
<div class="ab" style="left:0;top:120px;width:41px;height:36px;background:#fcfcfc;border-bottom:1px solid #e3e3e3;border-right:1px solid #e3e3e3"></div>
<svg style="left:55px;top:132.5px" width="9" height="14" viewBox="0 0 9 14"><path d="M1 0.7 L7.6 7 L1 13.3" fill="none" stroke="#2b2b2b" stroke-width="1.5"/></svg>
<div class="t" style="left:84px;top:127px;line-height:24px">Category : Adding Studies</div>
<div class="ab" style="left:40px;top:156px;width:649px;height:36px;background:#fdfdfd"></div>
<div class="ab" style="left:0;top:156px;width:41px;height:36px;background:#fcfcfc;border-bottom:1px solid #e3e3e3;border-right:1px solid #e3e3e3"></div>
<svg style="left:55px;top:168.5px" width="9" height="14" viewBox="0 0 9 14"><path d="M1 0.7 L7.6 7 L1 13.3" fill="none" stroke="#2b2b2b" stroke-width="1.5"/></svg>
<div class="t" style="left:84px;top:163px;line-height:24px">Category : Adding Task Information</div>
<div class="ab" style="left:40px;top:192px;width:649px;height:36px;background:#f9f9f9"></div>
<div class="ab" style="left:0;top:192px;width:41px;height:36px;background:#fcfcfc;border-bottom:1px solid #e3e3e3;border-right:1px solid #e3e3e3"></div>
<svg style="left:55px;top:204.5px" width="9" height="14" viewBox="0 0 9 14"><path d="M1 0.7 L7.6 7 L1 13.3" fill="none" stroke="#2b2b2b" stroke-width="1.5"/></svg>
<div class="t" style="left:84px;top:199px;line-height:24px">Category : Adding Template Information</div>
<div class="ab" style="left:40px;top:228px;width:649px;height:36px;background:#fdfdfd"></div>
<div class="ab" style="left:0;top:228px;width:41px;height:36px;background:#fcfcfc;border-bottom:1px solid #e3e3e3;border-right:1px solid #e3e3e3"></div>
<svg style="left:55px;top:240.5px" width="9" height="14" viewBox="0 0 9 14"><path d="M1 0.7 L7.6 7 L1 13.3" fill="none" stroke="#2b2b2b" stroke-width="1.5"/></svg>
<div class="t" style="left:84px;top:235px;line-height:24px">Category : Blocking Access To Equipment Information</div>
<div class="ab" style="left:40px;top:264px;width:649px;height:36px;background:#f9f9f9"></div>
<div class="ab" style="left:0;top:264px;width:41px;height:36px;background:#fcfcfc;border-bottom:1px solid #e3e3e3;border-right:1px solid #e3e3e3"></div>
<svg style="left:55px;top:276.5px" width="9" height="14" viewBox="0 0 9 14"><path d="M1 0.7 L7.6 7 L1 13.3" fill="none" stroke="#2b2b2b" stroke-width="1.5"/></svg>
<div class="t" style="left:84px;top:271px;line-height:24px">Category : Blocking Access To Studies</div>
<div class="ab" style="left:40px;top:300px;width:649px;height:36px;background:#fdfdfd"></div>
<div class="ab" style="left:0;top:300px;width:41px;height:36px;background:#fcfcfc;border-bottom:1px solid #e3e3e3;border-right:1px solid #e3e3e3"></div>
<svg style="left:55px;top:312.5px" width="9" height="14" viewBox="0 0 9 14"><path d="M1 0.7 L7.6 7 L1 13.3" fill="none" stroke="#2b2b2b" stroke-width="1.5"/></svg>
<div class="t" style="left:84px;top:307px;line-height:24px">Category : Blocking Access To Task Information</div>
<div class="ab" style="left:40px;top:336px;width:649px;height:36px;background:#f9f9f9"></div>
<div class="ab" style="left:0;top:336px;width:41px;height:36px;background:#fcfcfc;border-bottom:1px solid #e3e3e3;border-right:1px solid #e3e3e3"></div>
<svg style="left:55px;top:348.5px" width="9" height="14" viewBox="0 0 9 14"><path d="M1 0.7 L7.6 7 L1 13.3" fill="none" stroke="#2b2b2b" stroke-width="1.5"/></svg>
<div class="t" style="left:84px;top:343px;line-height:24px">Category : Blocking Access To Template Information</div>
</div>
<svg style="left:791.8px;top:152px" width="20" height="20" viewBox="-10 -10 20 20"><circle cx="0" cy="0" r="3.6" fill="none" stroke="#f7901e" stroke-width="1.6"/><line x1="6.30" y1="0.00" x2="9.40" y2="0.00" stroke="#f7901e" stroke-width="1.4"/><line x1="4.45" y1="4.45" x2="6.65" y2="6.65" stroke="#f7901e" stroke-width="1.4"/><line x1="0.00" y1="6.30" x2="0.00" y2="9.40" stroke="#f7901e" stroke-width="1.4"/><line x1="-4.45" y1="4.45" x2="-6.65" y2="6.65" stroke="#f7901e" stroke-width="1.4"/><line x1="-6.30" y1="0.00" x2="-9.40" y2="0.00" stroke="#f7901e" stroke-width="1.4"/><line x1="-4.45" y1="-4.45" x2="-6.65" y2="-6.65" stroke="#f7901e" stroke-width="1.4"/><line x1="-0.00" y1="-6.30" x2="-0.00" y2="-9.40" stroke="#f7901e" stroke-width="1.4"/><line x1="4.45" y1="-4.45" x2="6.65" y2="-6.65" stroke="#f7901e" stroke-width="1.4"/></svg>
<svg style="left:796.5px;top:196.6px" width="12" height="16" viewBox="0 0 12 16"><path d="M1.8 1.6 L10 8 L1.8 14.4 Z" fill="none" stroke="#6b6b6b" stroke-width="1.5" stroke-linejoin="miter"/></svg>
<div class="ab" style="left:1117.5px;top:499.5px;width:3.0px;height:3.0px;border-radius:50%;background:#9a9a9a"></div><div class="ab" style="left:1123.3px;top:499.5px;width:3.0px;height:3.0px;border-radius:50%;background:#9a9a9a"></div><div class="ab" style="left:1129.1px;top:499.5px;width:3.0px;height:3.0px;border-radius:50%;background:#9a9a9a"></div><div class="ab" style="left:1117.5px;top:505.3px;width:3.0px;height:3.0px;border-radius:50%;background:#9a9a9a"></div><div class="ab" style="left:1123.3px;top:505.3px;width:3.0px;height:3.0px;border-radius:50%;background:#9a9a9a"></div><div class="ab" style="left:1129.1px;top:505.3px;width:3.0px;height:3.0px;border-radius:50%;background:#9a9a9a"></div>
<div class="ab" style="left:781px;top:510px;width:689px;height:39px;background:#fff"></div>
<div class="t" style="left:815px;top:519px;font-size:16.5px;line-height:24px;font-weight:bold">Profiles</div>
<div class="t" style="left:901px;top:522px;line-height:24px">Companies</div>
<div class="t" style="left:1012px;top:522px;line-height:24px">Company Filters</div>
<div class="ab" style="left:796px;top:546px;width:98px;height:3px;background:#31b4de"></div>
<div class="t" style="left:793px;top:564px;font-size:16.5px;line-height:24px;font-weight:bold">Profiles</div>
<div class="ab" style="left:770.4px;top:575.4px;width:3.0px;height:3.0px;border-radius:50%;background:#9a9a9a"></div><div class="ab" style="left:776.4px;top:575.4px;width:3.0px;height:3.0px;border-radius:50%;background:#9a9a9a"></div><div class="ab" style="left:770.4px;top:581.4px;width:3.0px;height:3.0px;border-radius:50%;background:#9a9a9a"></div><div class="ab" style="left:776.4px;top:581.4px;width:3.0px;height:3.0px;border-radius:50%;background:#9a9a9a"></div><div class="ab" style="left:770.4px;top:587.4px;width:3.0px;height:3.0px;border-radius:50%;background:#9a9a9a"></div><div class="ab" style="left:776.4px;top:587.4px;width:3.0px;height:3.0px;border-radius:50%;background:#9a9a9a"></div>
<svg style="left:1184px;top:561px" width="22" height="22" viewBox="0 0 22 22">
<circle cx="11" cy="10.5" r="9.3" fill="none" stroke="#4a3e5c" stroke-width="1.9"/>
<path d="M11 5 V16 M5.5 10.5 H16.5" stroke="#4a3e5c" stroke-width="1.9"/></svg>
<svg style="left:1222px;top:560px" width="20" height="22" viewBox="0 0 20 22">
<path d="M1 5.1 H19" stroke="#4a3e5c" stroke-width="1.8"/>
<path d="M6.6 5.1 V3.3 Q6.6 1.9 8.2 1.9 H11.8 Q13.4 1.9 13.4 3.3 V5.1" fill="none" stroke="#4a3e5c" stroke-width="1.8"/>
<path d="M3.8 5.1 V18.3 Q3.8 20.5 5.9 20.5 H14.1 Q16.2 20.5 16.2 18.3 V5.1" fill="none" stroke="#4a3e5c" stroke-width="1.8"/>
<path d="M8 8 V17 M12 8 V17" stroke="#4a3e5c" stroke-width="1.9"/></svg>
<div class="ab" style="left:1258px;top:562px;width:1.5px;height:18px;background:#9a9a9a"></div>
<svg style="left:1274px;top:558px" width="22" height="26" viewBox="0 0 22 26">
<rect x="1.45" y="1.95" width="19" height="22.2" fill="none" stroke="#4f5860" stroke-width="1.4"/>
<ellipse cx="10.9" cy="10.3" rx="3" ry="3.4" fill="#4a3e5c"/><path d="M4.8 18.8 Q5 15.1 8.6 14.7 H13.2 Q16.8 15.1 17 18.8 Z" fill="#4a3e5c"/></svg>
<svg style="left:1309px;top:558px" width="27" height="26" viewBox="0 0 27 26">
<circle cx="10.5" cy="10.3" r="8.9" fill="none" stroke="#4a3e5c" stroke-width="1.4"/>
<ellipse cx="10.5" cy="10.3" rx="3.8" ry="8.9" fill="none" stroke="#4a3e5c" stroke-width="1.3"/>
<path d="M10.5 1.4 V19.2 M1.6 10.3 H19.4 M2.9 5.9 H18.1 M2.9 14.7 H18.1" stroke="#4a3e5c" stroke-width="1.2"/>
<rect x="8.3" y="12.3" width="17.5" height="13.5" fill="#f0f0ef"/>
<rect x="9.6" y="13.8" width="14.6" height="10.4" fill="none" stroke="#4f5860" stroke-width="1.4"/>
</svg>
<div class="t" style="left:1320px;top:572px;width:13px;text-align:center;font-size:10px;line-height:10px;font-weight:bold;color:#5a6268">ab</div>
<svg style="left:1348px;top:560px" width="26" height="24" viewBox="0 0 26 24"><rect x="0" y="0.5" width="5.7" height="4.1" fill="#4a3e5c"/><rect x="7.3" y="0.5" width="5.7" height="4.1" fill="#4a3e5c"/><rect x="15" y="0.5" width="5.7" height="4.1" fill="#a3a6a9"/><rect x="0" y="6.6" width="5.7" height="4.1" fill="#4a3e5c"/><rect x="7.3" y="6.6" width="5.7" height="4.1" fill="#4a3e5c"/><rect x="15" y="6.6" width="5.7" height="4.1" fill="#a3a6a9"/><rect x="0" y="12.7" width="5.7" height="4.1" fill="#a3a6a9"/><rect x="7.3" y="12.7" width="5.7" height="4.1" fill="#a3a6a9"/><rect x="15" y="12.7" width="5.7" height="4.1" fill="#a3a6a9"/><path d="M10.8 11.3 H25 L20.2 17 V23.8 H15.6 V17 Z" fill="#f0f0ef"/><path d="M11.8 12.3 H24 L19.5 17.2 V22.9 H16.3 V17.2 Z" fill="#4a3e5c"/></svg>
<div class="ab" style="left:1385px;top:562px;width:1.5px;height:18px;background:#9a9a9a"></div>
<svg style="left:1400px;top:558px" width="24" height="26" viewBox="0 0 24 26">
<path d="M7.5 10 H3 Q1 10 1 12 V22.5 Q1 24.5 3 24.5 H21 Q23 24.5 23 22.5 V12 Q23 10 21 10 H16.5" fill="none" stroke="#4a3e5c" stroke-width="1.9"/>
<path d="M12 17 V2 M6.5 7 L12 1.5 L17.5 7" fill="none" stroke="#4a3e5c" stroke-width="1.9"/></svg>
<svg style="left:1437px;top:558px" width="26" height="26" viewBox="0 0 26 26">
<path d="M7.5 9 H3 Q1 9 1 11 V22.5 Q1 24.5 3 24.5 H23 Q25 24.5 25 22.5 V11 Q25 9 23 9 H18.5" fill="none" stroke="#4a3e5c" stroke-width="1.9"/>
<path d="M13 1 V17 M7.5 11.5 L13 17 L18.5 11.5" fill="none" stroke="#4a3e5c" stroke-width="1.9"/></svg>
<div class="ab" style="left:782px;top:592px;width:687px;height:477px;background:#fff"></div>
<div class="ab" style="left:782px;top:592px;width:549px;height:48px;background:#fcfcfc;border-bottom:1px solid #e3e3e3;border-right:1px solid #e3e3e3"></div>
<div class="ab" style="left:1134px;top:592px;width:1px;height:47px;background:#e6e6e6"></div>
<div class="t" style="left:793px;top:604px;line-height:24px">Profile</div>
<div class="t" style="left:1146px;top:604px;line-height:24px;font-size:17.4px">Local Administrator</div>
<div class="ab" style="left:782px;top:640px;width:549px;height:36px;background:#f3f3f3"></div>
<div class="ab" style="left:1134px;top:640px;width:1px;height:37px;background:#fff"></div>
<div class="t" style="left:787px;top:646px;line-height:24px">Auditor</div>
<div class="ab" style="left:1222px;top:646px;width:23px;height:24px;background:#fff;border:1px solid #c4c4c4;border-radius:4px"></div>
<div class="ab" style="left:782px;top:677px;width:549px;height:36px;background:#ffffff"></div>
<div class="ab" style="left:1134px;top:677px;width:1px;height:37px;background:#fff"></div>
<div class="t" style="left:787px;top:683px;line-height:24px">No Access</div>
<div class="ab" style="left:1222px;top:683px;width:23px;height:24px;background:#fff;border:1px solid #c4c4c4;border-radius:4px"></div>
<div class="ab" style="left:782px;top:714px;width:549px;height:36px;background:#f3f3f3"></div>
<div class="ab" style="left:1134px;top:714px;width:1px;height:37px;background:#fff"></div>
<div class="t" style="left:787px;top:720px;line-height:24px">Power User</div>
<div class="ab" style="left:1222px;top:720px;width:23px;height:24px;background:#fff;border:1px solid #c4c4c4;border-radius:4px"></div>
<div class="ab" style="left:782px;top:751px;width:549px;height:36px;background:#ffffff"></div>
<div class="ab" style="left:1134px;top:751px;width:1px;height:37px;background:#fff"></div>
<div class="t" style="left:787px;top:757px;line-height:24px">Reports Only</div>
<div class="ab" style="left:1222px;top:757px;width:23px;height:24px;background:#fff;border:1px solid #c4c4c4;border-radius:4px"></div>
<div class="ab" style="left:782px;top:788px;width:549px;height:36px;background:#f3f3f3"></div>
<div class="ab" style="left:1134px;top:788px;width:1px;height:37px;background:#fff"></div>
<div class="t" style="left:787px;top:794px;line-height:24px">Standard User</div>
<div class="ab" style="left:1222px;top:794px;width:23px;height:24px;background:#fff;border:1px solid #c4c4c4;border-radius:4px"></div>
<div class="ab" style="left:782px;top:825px;width:549px;height:36px;background:#e4e4e4"></div>
<div class="ab" style="left:1134px;top:825px;width:1px;height:37px;background:#fff"></div>
<div class="t" style="left:787px;top:831px;line-height:24px">System Administrator</div>
<div class="ab" style="left:1222px;top:831px;width:23px;height:24px;background:#fff;border:1px solid #c4c4c4;border-radius:4px"></div>
<div class="t" style="left:6px;top:1072px;font-size:16.5px;line-height:24px">INDYSOFT(System Administrator)</div>
<div class="ab" style="left:380px;top:1072px;width:1px;height:23px;background:#cfcfcf"></div>
<div class="ab" style="left:608px;top:1072px;width:1px;height:23px;background:#cfcfcf"></div>
<div class="ab" style="left:1443px;top:1072px;width:1px;height:23px;background:#cfcfcf"></div>
<div class="ab" style="left:1456px;top:1086px;width:3.0px;height:3.0px;border-radius:50%;background:#999"></div><div class="ab" style="left:1462px;top:1086px;width:3.0px;height:3.0px;border-radius:50%;background:#999"></div><div class="ab" style="left:1456px;top:1092px;width:3.0px;height:3.0px;border-radius:50%;background:#999"></div><div class="ab" style="left:1462px;top:1092px;width:3.0px;height:3.0px;border-radius:50%;background:#999"></div>
<div class="ab" style="left:84px;top:88px;width:455px;height:681px;background:#fbfbfb;border:1px solid #cfcfcf;box-shadow:2px 3px 4px rgba(0,0,0,0.22)">
<div class="t" style="left:55px;top:13px;font-size:17.4px;line-height:24px">Equipment Searching / Reports / Layouts...</div>
<div class="t" style="left:55px;top:58px;font-size:17.4px;line-height:24px">Order Searching...</div>
<div class="ab" style="left:6px;top:95px;width:442px;height:39px;background:#e8e8e8;border-radius:3px"></div>
<div class="t" style="left:55px;top:103px;font-size:17.4px;line-height:24px">Copy User Settings...</div>
<div class="t" style="left:55px;top:148px;font-size:17.4px;line-height:24px">Copy Company Settings...</div>
<div class="ab" style="left:50px;top:182px;width:402px;height:1px;background:#e2e2e2"></div>
<div class="t" style="left:55px;top:194px;font-size:17.4px;line-height:24px">Log History...</div>
<div class="t" style="left:55px;top:239px;font-size:17.4px;line-height:24px">Password / Keycloak Settings...</div>
<div class="t" style="left:55px;top:284px;font-size:17.4px;line-height:24px">Numbering And Certificate Settings...</div>
<div class="t" style="left:55px;top:329px;font-size:17.4px;line-height:24px">Cloud Options...</div>
<div class="t" style="left:55px;top:374px;font-size:17.4px;line-height:24px">Login Custom Rules...</div>
<div class="t" style="left:55px;top:419px;font-size:17.4px;line-height:24px">Setup Sign-Off Captions...</div>
<div class="ab" style="left:50px;top:453px;width:402px;height:1px;background:#e2e2e2"></div>
<div class="t" style="left:55px;top:465px;font-size:17.4px;line-height:24px">Setup Full Client Global Preferences...</div>
<div class="t" style="left:55px;top:510px;font-size:17.4px;line-height:24px">Setup Read-Only Client Global Preferences...</div>
<div class="t" style="left:55px;top:555px;font-size:17.4px;line-height:24px">Setup Pro Client Global Preferences...</div>
<div class="t" style="left:55px;top:600px;font-size:17.4px;line-height:24px">Setup Vendor Location Preferences...</div>
<div class="t" style="left:55px;top:645px;font-size:17.4px;line-height:24px">Compare Preferences...</div>
</div>
<div class="ab" style="left:85px;top:176px;width:453px;height:58px;border:8px solid #7e63e9;border-radius:9px;box-shadow:1px 2px 4px rgba(0,0,0,0.25), inset 1px 2px 3px rgba(0,0,0,0.15)"></div>
<svg style="left:0;top:0" width="1475" height="1104" viewBox="0 0 1475 1104">
<defs><filter id="sh" x="-20%" y="-20%" width="140%" height="140%"><feGaussianBlur in="SourceAlpha" stdDeviation="2"/><feOffset dx="2" dy="3"/><feComponentTransfer><feFuncA type="linear" slope="0.35"/></feComponentTransfer><feMerge><feMergeNode/><feMergeNode in="SourceGraphic"/></feMerge></filter></defs>
<path d="M443.5 238.7 L480.0 246.3 L470.8 254.3 L761.4 496.4 L759.6 498.8 L464.2 262.3 L458.7 272.4 Z" fill="#7e63e9" filter="url(#sh)"/>
</svg>
<div class="ab" style="left:400px;top:200px;width:40px;height:26px;overflow:hidden">
<svg style="left:0;top:0" width="40" height="40" viewBox="0 0 40 40">
<path d="M9.6 7.2 V33 L14.5 28 L19 37 L22.5 35.5 L18.5 25.2 H26.6 V24.2 Z" fill="#fff" stroke="#000" stroke-width="1.5" stroke-linejoin="miter"/></svg></div>
</body></html>
